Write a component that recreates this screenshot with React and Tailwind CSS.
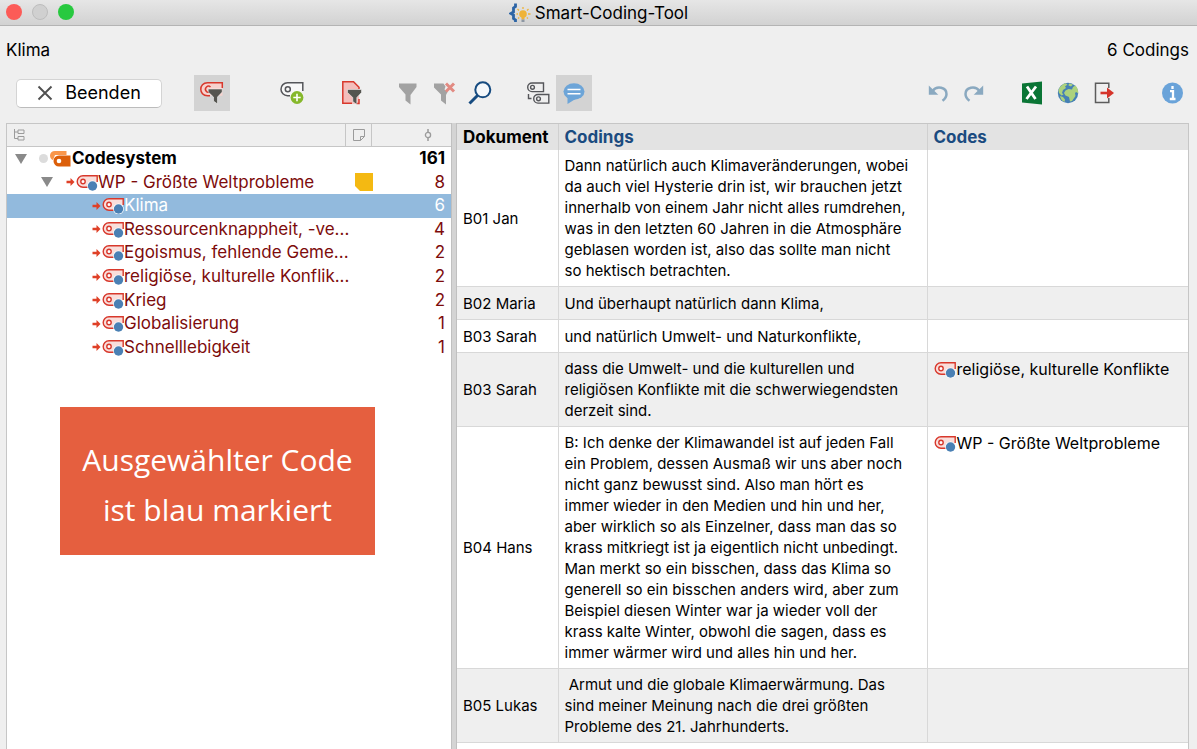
import { useState } from 'react';
import clsx from 'clsx';

const codes = [
  { label: 'WP - Größte Weltprobleme', count: 8, level: 1, memo: true },
  { label: 'Klima', count: 6, level: 2 },
  { label: 'Ressourcenknappheit, -ve...', count: 4, level: 2 },
  { label: 'Egoismus, fehlende Geme...', count: 2, level: 2 },
  { label: 'religiöse, kulturelle Konflik...', count: 2, level: 2 },
  { label: 'Krieg', count: 2, level: 2 },
  { label: 'Globalisierung', count: 1, level: 2 },
  { label: 'Schnelllebigkeit', count: 1, level: 2 },
];

const codings = [
  {
    doc: 'B01 Jan',
    text: 'Dann natürlich auch Klimaveränderungen, wobei\nda auch viel Hysterie drin ist, wir brauchen jetzt\ninnerhalb von einem Jahr nicht alles rumdrehen,\nwas in den letzten 60 Jahren in die Atmosphäre\ngeblasen worden ist, also das sollte man nicht\nso hektisch betrachten.',
  },
  { doc: 'B02 Maria', text: 'Und überhaupt natürlich dann Klima,' },
  { doc: 'B03 Sarah', text: 'und natürlich Umwelt- und Naturkonflikte,' },
  {
    doc: 'B03 Sarah',
    text: 'dass die Umwelt- und die kulturellen und\nreligiösen Konflikte mit die schwerwiegendsten\nderzeit sind.',
    code: 'religiöse, kulturelle Konflikte',
  },
  {
    doc: 'B04 Hans',
    text: 'B: Ich denke der Klimawandel ist auf jeden Fall\nein Problem, dessen Ausmaß wir uns aber noch\nnicht ganz bewusst sind. Also man hört es\nimmer wieder in den Medien und hin und her,\naber wirklich so als Einzelner, dass man das so\nkrass mitkriegt ist ja eigentlich nicht unbedingt.\nMan merkt so ein bisschen, dass das Klima so\ngenerell so ein bisschen anders wird, aber zum\nBeispiel diesen Winter war ja wieder voll der\nkrass kalte Winter, obwohl die sagen, dass es\nimmer wärmer wird und alles hin und her.',
    code: 'WP - Größte Weltprobleme',
  },
  {
    doc: 'B05 Lukas',
    text: ' Armut und die globale Klimaerwärmung. Das\nsind meiner Meinung nach die drei größten\nProbleme des 21. Jahrhunderts.',
  },
];

function CodeIcon() {
  return (
    <svg viewBox="0 0 22 17" className="h-[17px] w-[22px] shrink-0" aria-hidden="true">
      <path d="M21 1.700H7a5.800 5.800 0 0 0 0 11.600h14z" fill="#f9dedb" />
      <path d="M21.200 8V1.700H7a5.800 5.800 0 0 0 0 11.600h5" fill="none" stroke="#d8382c" strokeWidth="1.400" />
      <circle cx="7" cy="7.500" r="2.200" fill="#fff" stroke="#d8382c" strokeWidth="1.400" />
      <circle cx="16.500" cy="12" r="5.400" fill="#fff" />
      <circle cx="16.500" cy="12" r="4.700" fill="#4a80b4" />
    </svg>
  );
}

function RedArrow() {
  return (
    <svg viewBox="0 0 9 8" className="mr-px h-2 w-[9px] shrink-0" aria-hidden="true">
      <path d="M0.500 2.800h4V0L8.500 4l-4 4V5.200h-4z" fill="#df4027" />
    </svg>
  );
}

function Triangle() {
  return (
    <svg viewBox="0 0 12 10" className="h-[10px] w-3 shrink-0" aria-hidden="true">
      <path d="M0 0h12L6 10z" fill="#8a8a8a" />
    </svg>
  );
}

function RootIcon() {
  return (
    <svg viewBox="0 0 22 17" className="mr-px h-[17px] w-[22px] shrink-0" aria-hidden="true">
      <path d="M17.500 1H6C3 1 1 3 1 5.500 1 8 2.500 9.500 4 10l2-5h11.500z" fill="#f9964a" />
      <path d="M21.500 5.500H10a5.500 5.500 0 0 0 0 11h11.500z" fill="#dc5f0a" />
      <circle cx="10" cy="11" r="2.300" fill="#fff" />
    </svg>
  );
}

function AppIcon() {
  return (
    <svg viewBox="0 0 22 20" className="h-5 w-[22px]" aria-hidden="true">
      <path d="M6.500 0.500v3L4.500 5v4L2 10.500 4.500 12v3.500l2 1.500v2" fill="none" stroke="#2c64a5" strokeWidth="2.800" />
      <circle cx="14" cy="11" r="3.800" fill="#efb336" />
      <path d="M12.500 14h3v2.500h-3z" fill="#efb336" />
      <path d="M12.500 16.500h3v2.500h-3z" fill="#8d97a3" />
      <path d="M14 4v2M8.500 6l1.500 1.500M19.500 6L18 7.500M7.500 11h1.500M19 11h2.500M9 15.500l1.200-1M19 15.500l-1.200-1" stroke="#efb336" strokeWidth="1.300" />
    </svg>
  );
}

function CodeFilterIcon() {
  return (
    <svg viewBox="0 0 24 24" className="h-6 w-6" aria-hidden="true">
      <path d="M22.500 1.700H7a6.500 6.500 0 0 0 0 13h15.500z" fill="#f6d2ce" />
      <path d="M22.300 7V1.700H7.500C3 1.700 0.800 5 0.800 8.200s2.200 6.500 6.700 6.500H10" fill="none" stroke="#d8382c" strokeWidth="1.500" />
      <path d="M10.500 6a3 3 0 1 0-0.500 4.800" fill="none" stroke="#d8382c" strokeWidth="1.500" />
      <path d="M8.200 8h14v3l-4.700 5v7l-4-3v-4L8.200 11z" fill="#555550" stroke="#fff" strokeWidth="0.500" />
    </svg>
  );
}

function CodeAddIcon() {
  return (
    <svg viewBox="0 0 24 24" className="h-6 w-6" aria-hidden="true">
      <path d="M22.800 10V1.700H7.500a6.500 6.500 0 0 0 0 13H10" fill="#f8f8f8" stroke="#55565a" strokeWidth="1.500" />
      <circle cx="7.800" cy="8.200" r="2.500" fill="none" stroke="#55565a" strokeWidth="1.500" />
      <circle cx="17" cy="16.500" r="6.400" fill="#86b82b" />
      <path d="M17 12.800v7.400M13.300 16.500h7.400" stroke="#fff" strokeWidth="1.600" />
    </svg>
  );
}

function DocFilterIcon() {
  return (
    <svg viewBox="0 0 24 24" className="h-6 w-6" aria-hidden="true">
      <path d="M3 1h11l5 5v17H3z" fill="#f4bebc" />
      <path d="M12 22.300H2.800V0.800H13.500l5.500 5.500V8M19 18v4.500h-2.500" fill="none" stroke="#d8382c" strokeWidth="1.500" />
      <path d="M7.500 8.500h14v3l-4.700 5v7l-4-3v-4l-5.300-5z" fill="#555550" stroke="#fff" strokeWidth="0.500" />
    </svg>
  );
}

function FilterIcon({ cleared }) {
  return (
    <svg viewBox="0 0 24 24" className="h-6 w-6" aria-hidden="true">
      <path d={cleared ? 'M2 2.500h9.500l2 3-1 3 3 2.500-1.500 3v9.500l-5-4v-6l-7-7z' : 'M3 2.500h17.500v3.500l-6 8v9.500l-5-4v-6L3 6z'} fill="#a2a2a2" />
      {cleared && <path d="M14 2.500l8 8M22 2.500l-8 8" stroke="#e28a82" strokeWidth="3" />}
    </svg>
  );
}

function SearchIcon() {
  return (
    <svg viewBox="0 0 24 24" className="h-6 w-6" aria-hidden="true">
      <circle cx="14.800" cy="8.800" r="7.500" fill="#f5f8fb" stroke="#164b80" strokeWidth="2" />
      <path d="M9.500 14.500l-8 8" stroke="#164b80" strokeWidth="3" />
    </svg>
  );
}

function SubcodesIcon() {
  return (
    <svg viewBox="0 0 24 24" className="h-6 w-6" aria-hidden="true">
      <g fill="none" stroke="#55565a" strokeWidth="1.400">
        <path d="M17.500 2H6a4.300 4.300 0 0 0 0 8.600h11.500z" />
        <circle cx="6.500" cy="6.300" r="1.900" />
        <path d="M22.800 13.500H12a4.300 4.300 0 0 0 0 8.600h10.800z" />
        <circle cx="12.500" cy="17.800" r="1.900" />
        <path d="M2.500 13v4.500h3" />
      </g>
    </svg>
  );
}

function CommentIcon() {
  return (
    <svg viewBox="0 0 24 24" className="h-6 w-6" aria-hidden="true">
      <ellipse cx="12" cy="10.500" rx="10.500" ry="8.200" fill="#6da5d8" />
      <path d="M5.500 15v8l8-5z" fill="#6da5d8" />
      <path d="M5.500 8.500h13M5.500 12.700h13" stroke="#fff" strokeWidth="1.500" />
    </svg>
  );
}

function UndoIcon({ flipped }) {
  return (
    <svg viewBox="0 0 24 24" className={clsx('h-6 w-6', flipped && '-scale-x-100')} aria-hidden="true">
      <path d="M6.500 10c4.500-6 14-3.500 14 3 0 3-1.500 5-4 6.800" fill="none" stroke="#8aa9c0" strokeWidth="2.500" />
      <path d="M2.800 4.500v9.300h9.500z" fill="#8aa9c0" />
    </svg>
  );
}

function ExcelIcon() {
  return (
    <svg viewBox="0 0 24 24" className="h-6 w-6" aria-hidden="true">
      <path d="M2 2.500L22 0.500v23l-20-2z" fill="#0a7535" />
      <path d="M7 5.500l8.500 12.500M16 5.500L6.500 18" stroke="#fff" strokeWidth="2.800" />
    </svg>
  );
}

function GlobeIcon() {
  return (
    <svg viewBox="0 0 24 24" className="h-6 w-6" aria-hidden="true">
      <circle cx="12" cy="12" r="10.200" fill="#4580b5" />
      <path d="M2.500 9c1-3 3.500-5.800 7-6.800l2 1.300-2.500 2 1 1.500-3 2-1 3 1.500 1.500-2 1-2.500-2.500z" fill="#acd27d" />
      <path d="M9.500 9.500l3-1.500 3.500 0.500 1-2.500 2.500-1.500c2 2 3 5 2.700 8l-2-1.500-1.200 1 0.500 3-3.500 5-2 0.500-1-4.500-3.500-1.500-1.500-2.500z" fill="#acd27d" />
      <path d="M4 15l3 1 2 2.500-0.500 2.500C6 20 4.500 18 4 15zM13 2.500l4 1-2 2-2.500-1z" fill="#acd27d" />
    </svg>
  );
}

function ExportIcon() {
  return (
    <svg viewBox="0 0 24 24" className="h-6 w-6" aria-hidden="true">
      <path d="M16.800 7V2.300H3.500v19.200h13.300V17" fill="none" stroke="#5c5c5c" strokeWidth="1.500" />
      <path d="M8.500 12h8" stroke="#d5342a" strokeWidth="2.600" />
      <path d="M15 6.500l7 5.500-7 5.500z" fill="#d5342a" />
    </svg>
  );
}

function InfoIcon() {
  return (
    <svg viewBox="0 0 24 24" className="h-6 w-6" aria-hidden="true">
      <circle cx="12.500" cy="12" r="10.500" fill="#6aa3d9" />
      <path d="M12.500 5v3M10 10.200h3v7.300M9.800 18h5.700" fill="none" stroke="#fff" strokeWidth="2.300" />
    </svg>
  );
}

function ToolButton({ label, active, children }) {
  return (
    <button
      type="button"
      aria-label={label}
      className={clsx('flex h-9 w-9 items-center justify-center', active && 'bg-[#d3d3d3]')}
    >
      {children}
    </button>
  );
}

function Toolbar() {
  return (
    <div className="flex items-center pr-[7px] pl-4">
      <button
        type="button"
        className="flex h-[29px] w-[146px] items-center justify-center gap-3 rounded-[5px] border border-[#d4d4d4] border-b-[#bcbcbc] bg-white text-lg"
      >
        <svg viewBox="0 0 16 16" className="h-4 w-4" aria-hidden="true">
          <path d="M1.500 1.500l13 13M14.500 1.500l-13 13" stroke="#505050" strokeWidth="1.900" />
        </svg>
        Beenden
      </button>
      <div className="ml-8 flex">
        <ToolButton label="Codes filtern" active><CodeFilterIcon /></ToolButton>
      </div>
      <div className="ml-11 flex gap-6">
        <ToolButton label="Neuer Code"><CodeAddIcon /></ToolButton>
        <ToolButton label="Dokumente filtern"><DocFilterIcon /></ToolButton>
      </div>
      <div className="ml-5 flex">
        <ToolButton label="Filter"><FilterIcon /></ToolButton>
        <ToolButton label="Filter löschen"><FilterIcon cleared /></ToolButton>
        <ToolButton label="Suchen"><SearchIcon /></ToolButton>
      </div>
      <div className="ml-[22px] flex">
        <ToolButton label="Subcodes"><SubcodesIcon /></ToolButton>
        <ToolButton label="Kommentare" active><CommentIcon /></ToolButton>
      </div>
      <div className="ml-auto flex">
        <ToolButton label="Rückgängig"><UndoIcon /></ToolButton>
        <ToolButton label="Wiederholen"><UndoIcon flipped /></ToolButton>
      </div>
      <div className="ml-[22px] flex">
        <ToolButton label="Excel"><ExcelIcon /></ToolButton>
        <ToolButton label="HTML"><GlobeIcon /></ToolButton>
        <ToolButton label="Exportieren"><ExportIcon /></ToolButton>
      </div>
      <div className="ml-8 flex">
        <ToolButton label="Info"><InfoIcon /></ToolButton>
      </div>
    </div>
  );
}

function CodeTree() {
  const [selected, setSelected] = useState('Klima');

  return (
    <aside className="w-[445px] shrink-0 border-t border-l border-[#c6c6c6] bg-white">
      <div className="flex h-[23px] border-b border-[#c6c6c6] bg-[#efefef]">
        <div className="flex flex-1 items-center pl-1.5">
          <svg viewBox="0 0 12 12" className="h-3 w-3" aria-hidden="true">
            <path d="M1.500 0v9.500H5M1.500 3H5M5 1h6v3.500H5zM5 7.500h6V11H5z" fill="none" stroke="#9b9b9b" />
          </svg>
        </div>
        <div className="flex w-[27px] items-center justify-center border-x border-[#c6c6c6]">
          <svg viewBox="0 0 12 12" className="h-3 w-3" aria-hidden="true">
            <path d="M0.500 0.500h11v7l-4 4h-7zM11.500 7.500h-4v4" fill="none" stroke="#9b9b9b" />
          </svg>
        </div>
        <div className="flex w-[79px] items-center justify-center pl-8">
          <svg viewBox="0 0 8 12" className="h-3 w-2" aria-hidden="true">
            <path d="M4 0v3M4 9v3" stroke="#9b9b9b" strokeWidth="1.500" />
            <circle cx="4" cy="6" r="2.600" fill="none" stroke="#9b9b9b" strokeWidth="1.300" />
          </svg>
        </div>
      </div>

      <ul role="tree" className="grid h-[212px] auto-rows-fr text-[17px] leading-[23px] text-[#7d0b0b]">
        <li role="treeitem" className="flex items-center pr-1.5 pl-2 font-bold text-black">
          <Triangle />
          <span className="mr-px ml-3 h-[9px] w-[9px] rounded-full bg-[#dcdcdc]" />
          <RootIcon />
          <span className="flex-1">Codesystem</span>
          <span>161</span>
        </li>
        {codes.map((code) => (
          <li
            key={code.label}
            role="treeitem"
            aria-selected={selected === code.label}
            onClick={() => setSelected(code.label)}
            className={clsx(
              'flex items-center pr-1.5',
              code.level === 1 ? 'pl-[34px]' : 'pl-[85px]',
              selected === code.label && 'bg-[#92badd] text-white'
            )}
          >
            {code.level === 1 && (
              <span className="mr-[13px]"><Triangle /></span>
            )}
            <RedArrow />
            <CodeIcon />
            <span className="flex-1">{code.label}</span>
            {code.memo && (
              <svg viewBox="0 0 18 18" className="mr-[61px] h-[18px] w-[18px]" aria-hidden="true">
                <path d="M0 0h18v18H5l-5-5z" fill="#f4b912" />
              </svg>
            )}
            <span>{code.count}</span>
          </li>
        ))}
      </ul>

      <p className="mt-12 ml-[53px] flex h-[148px] w-[315px] items-center justify-center bg-[#e55f3f] pt-2 text-center font-['Open_Sans'] text-[30px] leading-[50px] text-white">
        Ausgewählter Code
        <br />
        ist blau markiert
      </p>
    </aside>
  );
}

function CodingsTable() {
  return (
    <div className="min-w-0 flex-1 border-t border-r border-[#c6c6c6] bg-white">
      <table className="w-full table-fixed border-collapse text-left text-[15px] leading-[21px]">
        <thead>
          <tr className="h-[26px] bg-[#e3e3e3] text-[17px]">
            <th className="w-[101px] border-r border-[#d0d0d0] px-1.5">Dokument</th>
            <th className="w-[369px] border-r border-[#d0d0d0] px-1.5 text-[#1b4b80]">Codings</th>
            <th className="px-1.5 text-[#1b4b80]">Codes</th>
          </tr>
        </thead>
        <tbody>
          {codings.map((row, i) => (
            <tr key={i} className="h-[33px] border-b border-[#d8d8d8] even:bg-[#efefef]">
              <td className="border-r border-[#d8d8d8] px-1.5">{row.doc}</td>
              <td className="border-r border-[#d8d8d8] py-[5px] pl-1.5 whitespace-pre">{row.text}</td>
              <td className="px-1.5 py-[5px] align-top text-base leading-[21px]">
                {row.code && (
                  <span className="flex items-center gap-px pt-px">
                    <CodeIcon />
                    {row.code}
                  </span>
                )}
              </td>
            </tr>
          ))}
        </tbody>
      </table>
    </div>
  );
}

export default function App() {
  return (
    <div className="flex min-h-screen flex-col bg-[#efefef] font-['Inter',sans-serif] text-black">
      <header className="grid h-[26px] grid-cols-[1fr_auto_1fr] items-center border-b border-[#b4b4b4] bg-linear-to-b from-[#e6e6e6] to-[#d2d2d2]">
        <div className="flex gap-2.5 pb-px pl-1.5">
          <button type="button" aria-label="Schließen" className="h-4 w-4 rounded-full bg-[#fc5b57]" />
          <button type="button" aria-label="Minimieren" className="h-4 w-4 rounded-full border border-[#bdbdbd] bg-[#d0d0d0]" />
          <button type="button" aria-label="Maximieren" className="h-4 w-4 rounded-full bg-[#27c93f]" />
        </div>
        <h1 className="flex items-center gap-1 text-[17px] leading-6">
          <AppIcon />
          Smart-Coding-Tool
        </h1>
      </header>

      <div className="flex h-[49px] items-center justify-between pr-2 pl-1.5 text-[17px]">
        <span>Klima</span>
        <span>6 Codings</span>
      </div>
      <Toolbar />

      <main className="mt-3 flex flex-1 pr-2 pl-1.5">
        <CodeTree />
        <div className="w-1.5 shrink-0 border-x border-[#c0c0c0] bg-[#d4d4d4]" />
        <CodingsTable />
      </main>
    </div>
  );
}
